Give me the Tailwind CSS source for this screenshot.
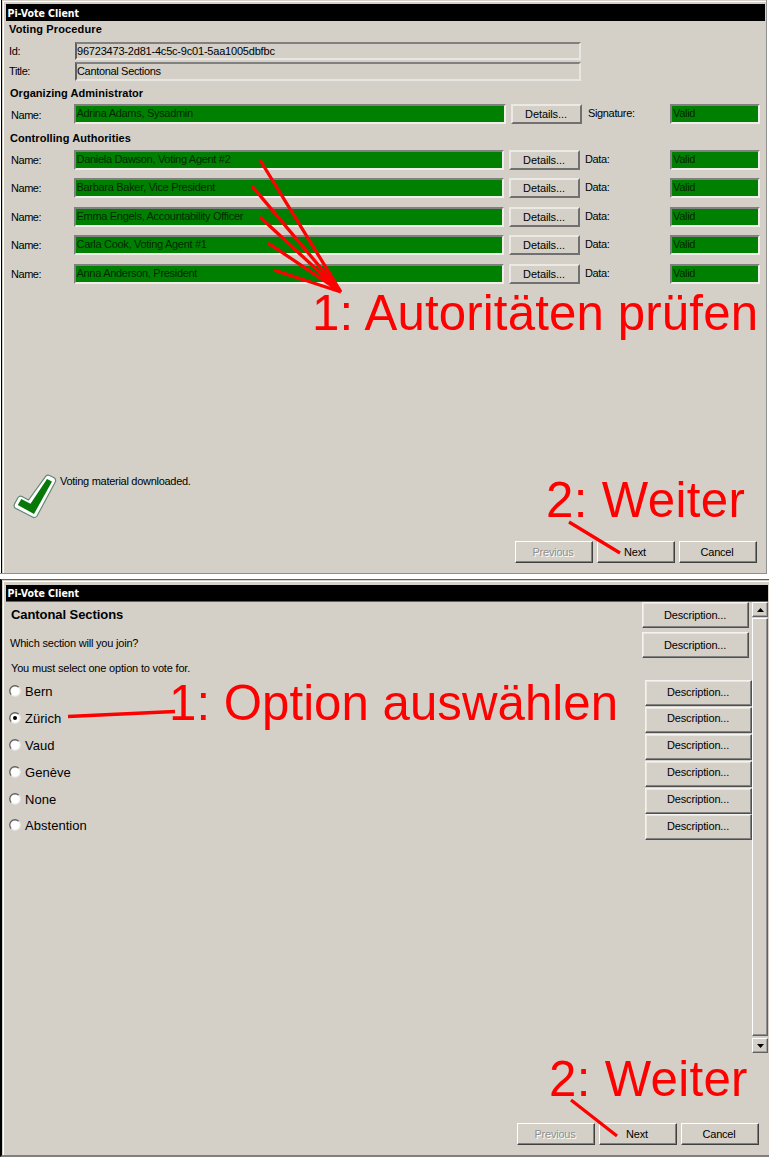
<!DOCTYPE html>
<html lang="en">
<head>
<meta charset="utf-8">
<title>Pi-Vote Client</title>
<script src="https://cdn.jsdelivr.net/npm/@tailwindcss/browser@4"></script>
</head>
<body class="relative w-[769px] h-[1157px] overflow-hidden bg-white font-['Liberation_Sans',Arial,sans-serif] text-[11px] leading-[13px] text-black">

<section class="flex h-[574px] w-[767px] flex-col border-r border-b border-[#909090] bg-[#d4d0c8]">
  <div class="flex h-full flex-col border-l border-white">
  <div class="flex h-full flex-col border-l border-black">
  <div class="flex h-full flex-col border-l border-t border-[#d4d0c8]">
  <div class="flex h-full flex-col border-l border-t border-white pl-[2px] pt-[2px]">
    <header class="flex h-[17px] w-[759px] items-center bg-black pl-[1.5px] pt-px font-['DejaVu_Sans_Condensed','DejaVu_Sans',sans-serif] text-[10.5px] font-bold tracking-[-0.02px] text-white">Pi-Vote Client</header>
    <h2 class="h-[21px] pl-[3px] pt-[2px] font-bold tracking-[0.13px]">Voting Procedure</h2>
    <div class="flex h-[20px] items-start">
      <span class="w-[69px] pl-[3px] pt-[3px] tracking-[-0.3px]">Id:</span>
      <div class="h-[18px] w-[506px] border-2 border-t-[#808080] border-l-[#606060] border-r-[#e8e6e0] border-b-[#e8e6e0] pt-px tracking-[-0.2px]">96723473-2d81-4c5c-9c01-5aa1005dbfbc</div>
    </div>
    <div class="flex h-[25px] items-start">
      <span class="w-[69px] pl-[3px] pt-[3px] tracking-[-0.4px]">Title:</span>
      <div class="h-[19px] w-[506px] border-2 border-t-[#808080] border-l-[#606060] border-r-[#e8e6e0] border-b-[#e8e6e0] pt-px tracking-[-0.33px]">Cantonal Sections</div>
    </div>
    <h2 class="h-[17px] pl-[4px] font-bold tracking-[0.04px]">Organizing Administrator</h2>
    <div id="admin"></div>
    <h2 class="-mt-px h-[17.5px] pl-[4px] font-bold tracking-[0.07px]">Controlling Authorities</h2>
    <div id="authorities" class="flex flex-col"></div>
    <div class="mt-auto flex h-[67px] items-start">
      <svg class="ml-[7px] h-[46px] w-[44px]" viewBox="0 0 44 46"><path d="M33 2Q34.500 .500 36.500 1.500L41.500 4Q43.500 6 42 8.500L24 42Q22 44.500 19.500 43L2 34Q0.500 32.500 1.500 30L5 23.500Q6.500 21.500 9 22.500L15.500 26Z" fill="#fff" stroke="#5c8a72" stroke-width="1.200"/><path d="M34 5L39 7.500L21 40L4.800 31L8.300 25L17.500 29.800Z" fill="#087808"/></svg>
      <p class="ml-[3px] pt-px tracking-[-0.28px]">Voting material downloaded.</p>
    </div>
    <footer class="flex h-[32px] items-start justify-end gap-[4px] pr-[9px]" data-nav></footer>
  </div></div></div></div>
</section>

<section class="mt-[5px] flex h-[578px] w-[769px] flex-col border-l-2 border-t border-l-black border-t-[#606060] border-b-2 border-b-[#808080] bg-[#d4d0c8]">
  <div class="flex h-full flex-col border-t border-l border-[#d4d0c8]">
  <div class="flex h-full flex-col border-t border-l border-white pl-[2px] pt-[3px]">
    <header class="flex h-[17px] w-[762px] items-center border-b border-[#606060] bg-black pl-[1.5px] pt-px font-['DejaVu_Sans_Condensed','DejaVu_Sans',sans-serif] text-[10.5px] font-bold tracking-[-0.02px] text-white">Pi-Vote Client</header>
    <div class="flex">
      <main class="w-[746px]">
        <div class="flex h-[29px] items-start justify-between pr-[3px]">
          <h1 class="pl-[5px] pt-[5px] text-[13px] font-bold leading-[15px] tracking-[-0.07px]">Cantonal Sections</h1>
          <button class="h-[26px] w-[107px] border border-t-[#f4f3f0] border-l-[#f4f3f0] border-r-[#505050] border-b-[#505050] pr-px tracking-[-0.14px] shadow-[inset_-1px_-1px_#808080,inset_1px_1px_#e8e6e0]">Description...</button>
        </div>
        <div class="flex h-[26px] items-start justify-between pr-[3px]">
          <p class="pl-[4px] pt-[6px] tracking-[-0.2px]">Which section will you join?</p>
          <button class="mt-[1px] h-[26px] w-[107px] border border-t-[#f4f3f0] border-l-[#f4f3f0] border-r-[#505050] border-b-[#505050] pr-px tracking-[-0.14px] shadow-[inset_-1px_-1px_#808080,inset_1px_1px_#e8e6e0]">Description...</button>
        </div>
        <p class="h-[23px] pl-[5px] pt-[5px] tracking-[-0.18px]">You must select one option to vote for.</p>
        <div id="options"></div>
      </main>
      <aside class="flex h-[451px] w-[16px] flex-col">
        <div class="flex h-[15px] items-center justify-center border border-t-white border-l-white border-r-[#606060] border-b-[#606060] shadow-[inset_-1px_-1px_#a0a0a0]"><svg class="h-[4px] w-[7px]" viewBox="0 0 7 4"><path d="M3.500 0L7 4H0Z"/></svg></div>
        <div class="mt-px flex-1 border border-t-white border-l-white border-r-[#606060] border-b-[#606060] shadow-[inset_-1px_-1px_#909090]"></div>
        <div class="mt-[2px] flex h-[15px] items-center justify-center border border-t-white border-l-white border-r-[#606060] border-b-[#606060] shadow-[inset_-1px_-1px_#a0a0a0]"><svg class="h-[4px] w-[7px]" viewBox="0 0 7 4"><path d="M0 0H7L3.500 4Z"/></svg></div>
      </aside>
    </div>
    <footer class="mt-auto flex h-[32px] items-start justify-end gap-[4px] pr-[10px]" data-nav></footer>
  </div></div>
</section>

<svg class="absolute inset-0 h-[1157px] w-[769px]" viewBox="0 0 769 1157" fill="red" font-family="Liberation Sans, Arial, sans-serif" font-size="49.200">
  <g stroke="red" stroke-width="3.300" fill="none">
    <path d="M260 160L341 292M252 186L341 292M260 217L341 292M268 243L341 292M274 270L341 292"/>
    <path d="M569 522L620 553M68 716.500L175 711.500M571 1100L617 1136"/>
  </g>
  <text x="312" y="330" textLength="446">1: Autoritäten prüfen</text>
  <text x="546" y="517" textLength="199">2: Weiter</text>
  <text x="169" y="720" textLength="449">1: Option auswählen</text>
  <text x="549" y="1096" textLength="198.500">2: Weiter</text>
</svg>

<script>
const row = (name, label, admin) => `
  <div class="flex items-start ${admin ? 'h-[29px]' : 'h-[28.65px]'}">
    <span class="w-[68px] pl-[5px] tracking-[-0.45px] ${admin ? 'pt-[5px]' : 'pt-[4px]'}">Name:</span>
    <div class="h-[20px] border-2 border-t-[#808080] border-l-[#808080] border-r-[#f0eeea] border-b-[#f0eeea] bg-[#008000] pl-[0.5px] pt-[1px] tracking-[-0.3px] text-[#002800] ${admin ? 'w-[432px]' : 'w-[430px]'}">${name}</div>
    <button class="ml-[5px] h-[20px] w-[71px] border-2 border-t-[#ebe9e4] border-l-[#ebe9e4] border-r-[#707070] border-b-[#707070] pr-px leading-[14px] tracking-[-0.1px]">Details...</button>
    <span class="pt-[3px] tracking-[-0.35px] ${admin ? 'w-[88px] pl-[6px]' : 'w-[90px] pl-[5px]'}">${label}</span>
    <div class="h-[20px] w-[90px] border-2 border-t-[#808080] border-l-[#808080] border-r-[#f0eeea] border-b-[#f0eeea] bg-[#008000] pl-px pt-[1px] tracking-[-0.3px] text-[#002800]">Valid</div>
  </div>`;
document.getElementById('admin').innerHTML = row('Adrina Adams, Sysadmin', 'Signature:', true);
document.getElementById('authorities').innerHTML = ['Daniela Dawson, Voting Agent #2', 'Barbara Baker, Vice President', 'Emma Engels, Accountability Officer', 'Carla Cook, Voting Agent #1', 'Anna Anderson, President'].map(n => row(n, 'Data:', false)).join('');

document.getElementById('options').innerHTML = ['Bern', 'Zürich', 'Vaud', 'Genève', 'None', 'Abstention'].map(n => `
  <div class="flex h-[26.9px] items-start">
    <svg class="ml-[3px] mt-[5px] h-[12px] w-[12px]" viewBox="0 0 12 12"><circle cx="6" cy="6" r="5" fill="#fff"/><path d="M2.300 9.700A5.200 5.200 0 0 1 9.700 2.300" fill="none" stroke="#606060" stroke-width="1.300"/><path d="M9.700 2.300A5.200 5.200 0 0 1 2.300 9.700" fill="none" stroke="#eeece8" stroke-width="1.200"/>${n === 'Zürich' ? '<circle cx="6" cy="6" r="2" fill="#000"/>' : ''}</svg>
    <span class="flex-1 pl-[4px] pt-[4px] text-[13px] leading-[15px] tracking-[0.03px]">${n}</span>
    <button class="h-[26px] w-[107px] border border-t-[#f4f3f0] border-l-[#f4f3f0] border-r-[#505050] border-b-[#505050] pr-px pb-[2px] tracking-[-0.14px] shadow-[inset_-1px_-1px_#808080,inset_1px_1px_#e8e6e0]">Description...</button>
  </div>`).join('');

document.querySelectorAll('[data-nav]').forEach(f => f.innerHTML = ['Previous', 'Next', 'Cancel'].map(n => `
  <button class="h-[22px] w-[78px] border border-t-white border-l-white border-r-[#404040] border-b-[#404040] pr-[2px] tracking-[-0.2px] shadow-[inset_-1px_-1px_#808080] ${n === 'Previous' ? 'text-[#909090] [text-shadow:1px_1px_#fff]' : ''}">${n}</button>`).join(''));
</script>
</body>
</html>
